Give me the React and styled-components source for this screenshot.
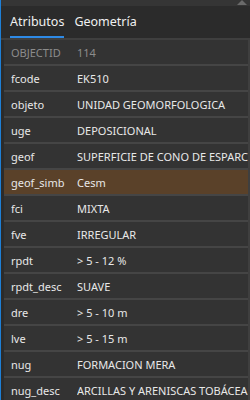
import React from 'react';
import styled, { createGlobalStyle } from 'styled-components';

const GlobalStyle = createGlobalStyle`
  html, body { margin: 0; padding: 0; background: #2b2b2b; }
  body { width: 250px; height: 400px; overflow: hidden; }
`;

const rows = [
  { name: 'OBJECTID', value: '114', disabled: true },
  { name: 'fcode', value: 'EK510' },
  { name: 'objeto', value: 'UNIDAD GEOMORFOLOGICA' },
  { name: 'uge', value: 'DEPOSICIONAL' },
  { name: 'geof', value: 'SUPERFICIE DE CONO DE ESPARCIMIENTO' },
  { name: 'geof_simb', value: 'Cesm', selected: true },
  { name: 'fci', value: 'MIXTA' },
  { name: 'fve', value: 'IRREGULAR' },
  { name: 'rpdt', value: '> 5 - 12 %' },
  { name: 'rpdt_desc', value: 'SUAVE' },
  { name: 'dre', value: '> 5 - 10 m' },
  { name: 'lve', value: '> 5 - 15 m' },
  { name: 'nug', value: 'FORMACION MERA' },
  { name: 'nug_desc', value: 'ARCILLAS Y ARENISCAS TOBÁCEAS' },
];

const Pane = styled.div`
  position: relative;
  width: 250px;
  height: 400px;
  overflow: hidden;
  background: #2b2b2b;
  border-left: 1px solid #1e7fd6;
  box-sizing: border-box;
  font-family: "Segoe UI", "Noto Sans", "Open Sans", sans-serif;
`;

const TopStrip = styled.div`
  height: 6px;
  background: #353535;
`;

const ScrollArrow = styled.div`
  position: absolute;
  top: 0;
  right: 3px;
  width: 0;
  height: 0;
  border-left: 5px solid transparent;
  border-right: 5px solid transparent;
  border-bottom: 5px solid #6a6a6a;
`;

const Tabs = styled.div`
  display: flex;
  gap: 10px;
  padding: 0 0 0 9px;
  height: 32px;
  border-bottom: 2px solid #3f3f3f;
`;

const Tab = styled.div`
  display: flex;
  align-items: center;
  padding-top: 1px;
  font-size: 12.5px;
  color: #f0f0f0;
  border-bottom: 2px solid ${p => (p.active ? '#2e8ae6' : 'transparent')};
  box-sizing: border-box;
`;

const Table = styled.div`
  display: flex;
  flex-direction: column;
  margin-left: 3px;
  border-right: 2px solid #3f3f3f;
`;

const Row = styled.div`
  display: grid;
  grid-template-columns: 66px 1fr;
  align-items: center;
  height: 24px;
  padding-left: 7px;
  background: ${p => (p.selected ? '#5a4129' : '#333333')};
  border-bottom: 2px solid #454545;
  font-size: 11px;
  color: ${p => (p.disabled ? '#8c8c8c' : '#e8e8e8')};
`;

const Cell = styled.span`
  white-space: nowrap;
  overflow: hidden;
`;

export default function App() {
  return (
    <>
      <GlobalStyle />
      <Pane>
        <TopStrip />
        <ScrollArrow />
        <Tabs>
          <Tab active>Atributos</Tab>
          <Tab>Geometría</Tab>
        </Tabs>
        <Table>
          {rows.map(r => (
            <Row key={r.name} selected={r.selected} disabled={r.disabled}>
              <Cell>{r.name}</Cell>
              <Cell>{r.value}</Cell>
            </Row>
          ))}
        </Table>
      </Pane>
    </>
  );
}
